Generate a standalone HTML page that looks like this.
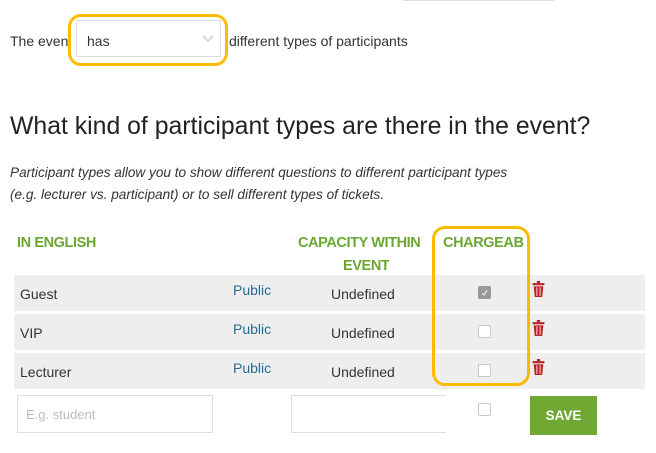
<!DOCTYPE html><html><head><style>
body{margin:0;width:656px;height:453px;background:#fff;font-family:"Liberation Sans",sans-serif;color:#333;position:relative;overflow:hidden}
.a{position:absolute}
.g{color:#6aa632;font-weight:bold;font-size:14.5px;letter-spacing:-0.4px}
.row{position:absolute;left:14px;width:631px;height:36px;background:#eeeeee;font-size:14px}
.row span{position:absolute;top:11px}
.pub{color:#2a6a8a;top:7px!important}
.cb{position:absolute;left:478px;width:11px;height:11px;border:1px solid #c8c8c8;border-radius:2px;background:#fff}
.tr{position:absolute;left:518px;top:6px;width:13px;height:16px}
</style></head><body>
<div class="a" style="left:403px;top:-2px;width:150px;height:2px;border:1px solid #ddd;border-top:0"></div>
<div class="a" style="left:10px;top:33px;font-size:14px">The even</div>
<div class="a" style="left:76px;top:20px;width:145px;height:37px;border:1px solid #ddd;box-sizing:border-box;background:#fff"></div>
<div class="a" style="left:87px;top:33px;font-size:14px">has</div>
<svg class="a" style="left:202px;top:35px" width="12" height="8"><path d="M1 1L6 6L11 1" stroke="#ccc" stroke-width="1.5" fill="none"/></svg>
<div class="a" style="left:68px;top:14px;width:154px;height:46px;border:3px solid #fbbb00;border-radius:13px"></div>
<div class="a" style="left:229px;top:33px;font-size:14px">different types of participants</div>
<div class="a" style="left:10px;top:113px;font-size:24.8px;color:#222">What kind of participant types are there in the event?</div>
<div class="a" style="left:10px;top:162px;font-size:13.6px;font-style:italic;line-height:22px;color:#333">Participant types allow you to show different questions to different participant types<br>(e.g. lecturer vs. participant) or to sell different types of tickets.</div>
<div class="a g" style="left:17px;top:235px">IN ENGLISH</div>
<div class="a g" style="left:298px;top:235px;width:134px;line-height:17px;white-space:nowrap;overflow:hidden">CAPACITY WITHIN</div>
<div class="a g" style="left:343px;top:259px;line-height:14px;height:14px;overflow:hidden">EVENT</div>
<div class="a g" style="left:443px;top:235px;width:81px;overflow:hidden;white-space:nowrap">CHARGEABLE</div>
<div class="row" style="top:275px"><span style="left:6px">Guest</span><span class="pub" style="left:219px">Public</span><span style="left:317px">Undefined</span><div class="cb" style="top:11px;left:464px;background:#999;border-color:#999"><svg width="11" height="11" style="position:absolute;left:0;top:0"><path d="M3 6l2 2 3-5" stroke="#eee" stroke-width="1.2" fill="none"/></svg></div><svg class="tr" viewBox="0 0 11 15"><rect x="0" y="2" width="11" height="2" fill="#b22"/><rect x="4" y="0" width="3" height="2" fill="#b22"/><path d="M1 5h9l-1 10H2z" fill="#b22"/><path d="M4 6v8M7 6v8" stroke="#fff" stroke-width=".8"/></svg></div>
<div class="row" style="top:314px"><span style="left:6px">VIP</span><span class="pub" style="left:219px">Public</span><span style="left:317px">Undefined</span><div class="cb" style="top:11px;left:464px"></div><svg class="tr" viewBox="0 0 11 15"><rect x="0" y="2" width="11" height="2" fill="#b22"/><rect x="4" y="0" width="3" height="2" fill="#b22"/><path d="M1 5h9l-1 10H2z" fill="#b22"/><path d="M4 6v8M7 6v8" stroke="#fff" stroke-width=".8"/></svg></div>
<div class="row" style="top:353px"><span style="left:6px">Lecturer</span><span class="pub" style="left:219px">Public</span><span style="left:317px">Undefined</span><div class="cb" style="top:11px;left:464px"></div><svg class="tr" viewBox="0 0 11 15"><rect x="0" y="2" width="11" height="2" fill="#b22"/><rect x="4" y="0" width="3" height="2" fill="#b22"/><path d="M1 5h9l-1 10H2z" fill="#b22"/><path d="M4 6v8M7 6v8" stroke="#fff" stroke-width=".8"/></svg></div>
<div class="a" style="left:432px;top:226px;width:92px;height:154px;border:3px solid #fbbb00;border-radius:13px"></div>
<div class="a" style="left:17px;top:395px;width:196px;height:38px;border:1px solid #ddd;box-sizing:border-box"></div>
<div class="a" style="left:26px;top:407px;font-size:13px;color:#bbb">E.g. student</div>
<div class="a" style="left:291px;top:395px;width:155px;height:38px;border:1px solid #ddd;border-right:0;box-sizing:border-box"></div>
<div class="cb" style="top:403px"></div>
<div class="a" style="left:530px;top:396px;width:67px;height:39px;background:#6fa833;color:#fff;font-weight:bold;font-size:13.5px;text-align:center;line-height:39px">SAVE</div>
</body></html>
